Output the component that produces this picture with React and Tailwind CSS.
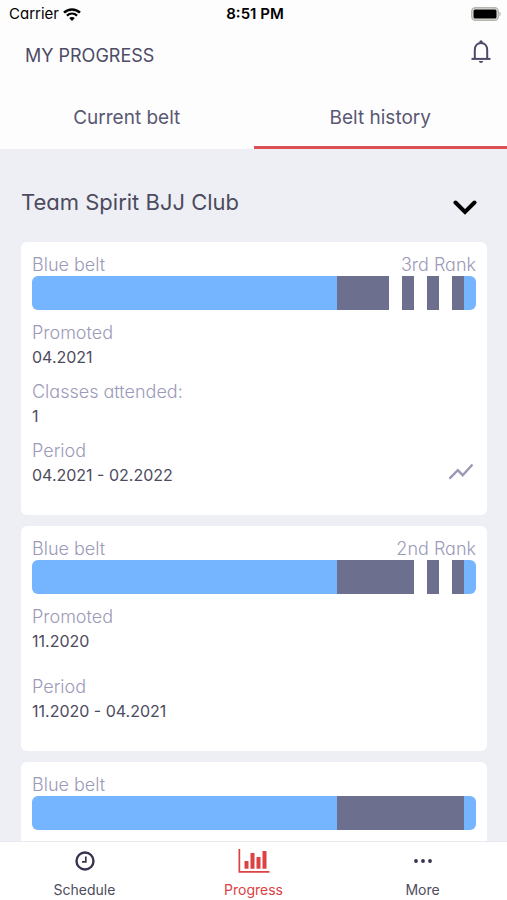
const tabs = [
  { label: "Current belt", active: false },
  { label: "Belt history", active: true },
];

const promotions = [
  {
    id: 3,
    belt: "Blue belt",
    rank: "3rd Rank",
    stripes: 3,
    promoted: "04.2021",
    classes: "1",
    period: "04.2021 - 02.2022",
    chart: true,
  },
  {
    id: 2,
    belt: "Blue belt",
    rank: "2nd Rank",
    stripes: 2,
    promoted: "11.2020",
    period: "11.2020 - 04.2021",
  },
  { id: 1, belt: "Blue belt", stripes: 0 },
];

function WifiIcon() {
  return (
    <svg width="18" height="13" viewBox="0 0 18 13" fill="none" aria-hidden="true">
      <path d="M1 4.6C5.6.3 12.4.3 17 4.6" stroke="#000" strokeWidth="2.5" />
      <path d="M3.9 7.7c3-2.8 7.200-2.800 10.200 0" stroke="#000" strokeWidth="2.3" />
      <path d="M6.200 10.100c1.600-1.500 4-1.500 5.600 0L9 13z" fill="#000" />
    </svg>
  );
}

function BatteryIcon() {
  return (
    <svg width="30" height="14" viewBox="0 0 30 14" aria-hidden="true">
      <rect x="0.700" y="0.700" width="26.600" height="12.600" rx="3.800" fill="#e4e4e0" stroke="#b5b5b0" strokeWidth="1.400" />
      <rect x="2.500" y="2.500" width="23" height="9" rx="1.500" fill="#000" />
      <path d="M28.500 4.800c1.600.6 1.600 3.800 0 4.400z" fill="#a9a9a9" />
    </svg>
  );
}

function BellIcon() {
  return (
    <svg width="20" height="24" viewBox="0 0 20 24" fill="none" stroke="#4c4a66" aria-hidden="true">
      <path d="M3.800 18.500V10c0-4 2.500-7 6.200-7s6.200 3 6.200 7v8.500" strokeWidth="2" />
      <path d="M.5 18.900h19" strokeWidth="2" />
      <circle cx="10" cy="2" r="1.700" fill="#4c4a66" stroke="none" />
      <path d="M7.800 21h4.400c-.3 1.300-1.100 2-2.200 2s-1.900-.7-2.200-2z" fill="#4c4a66" stroke="none" />
    </svg>
  );
}

function ChevronIcon() {
  return (
    <svg width="24" height="16" viewBox="0 0 24 16" fill="none" aria-hidden="true">
      <path d="M2.500 2.500 12 12l9.500-9.500" stroke="#000" strokeWidth="4" strokeLinecap="round" />
    </svg>
  );
}

function TrendIcon() {
  return (
    <svg width="26" height="18" viewBox="0 0 26 18" fill="none" aria-hidden="true">
      <path d="m1.500 15.700 8.300-8.500 4.900 5L24.500 1.500" stroke="#9b99b3" strokeWidth="2.400" strokeLinejoin="miter" />
    </svg>
  );
}

function ClockIcon() {
  return (
    <svg width="20" height="20" viewBox="0 0 20 20" fill="none" stroke="#35334f" aria-hidden="true">
      <circle cx="10" cy="10" r="8.500" strokeWidth="2.400" />
      <path d="M10.800 5.500v5.300H7" strokeWidth="1.700" />
    </svg>
  );
}

function ChartIcon() {
  return (
    <svg width="32" height="24" viewBox="0 0 32 24" fill="#dc4144" aria-hidden="true">
      <path d="M.5 0h1.700v22H31.500v1.700H.5z" />
      <rect x="6.500" y="12" width="4" height="7.700" rx=".5" />
      <rect x="12.500" y="4" width="4" height="15.700" rx=".5" />
      <rect x="18.500" y="8" width="4" height="11.700" rx=".5" />
      <rect x="24.500" y="2" width="4" height="17.700" rx=".5" />
    </svg>
  );
}

function MoreIcon() {
  return (
    <svg width="18" height="4" viewBox="0 0 18 4" fill="#35334f" aria-hidden="true">
      <circle cx="2" cy="2" r="1.900" />
      <circle cx="9" cy="2" r="1.900" />
      <circle cx="16" cy="2" r="1.900" />
    </svg>
  );
}

function BeltBar({ stripes }) {
  return (
    <div className="flex h-[34px] overflow-hidden rounded-md bg-[#75b4ff]">
      <div className="ml-auto mr-3 flex w-[127px] justify-end gap-3 bg-[#6d6f8f] pr-3">
        {Array.from({ length: stripes }, (_, i) => (
          <span key={i} className="w-[13px] bg-white" />
        ))}
      </div>
    </div>
  );
}

function Field({ label, value }) {
  return (
    <div>
      <dt className="text-lg leading-6 font-light text-[#9b9ab8]">{label}</dt>
      <dd className="text-base leading-6 text-[#4d4b5e]">{value}</dd>
    </div>
  );
}

function PromotionCard({ item }) {
  return (
    <article className="rounded-md bg-white px-[11px] pt-[11px] pb-7">
      <div className="flex h-[23px] justify-between text-lg leading-6 font-light text-[#9b9ab8]">
        <h3>{item.belt}</h3>
        {item.rank && <span>{item.rank}</span>}
      </div>
      <BeltBar stripes={item.stripes} />
      {item.period && (
        <div className="mt-[11px] flex items-end justify-between">
          <dl className={item.classes ? "flex flex-col gap-[11px]" : "flex flex-col gap-[22px]"}>
            <Field label="Promoted" value={item.promoted} />
            {item.classes && <Field label="Classes attended:" value={item.classes} />}
            <Field label="Period" value={item.period} />
          </dl>
          {item.chart && (
            <button type="button" aria-label="Show progress chart" className="pr-0.5 pb-1.5">
              <TrendIcon />
            </button>
          )}
        </div>
      )}
    </article>
  );
}

function NavItem({ label, icon, active }) {
  return (
    <a
      href="#"
      aria-current={active ? "page" : undefined}
      className={
        active
          ? "flex flex-1 flex-col items-center gap-[7px] pt-[7px] text-[#dc4144]"
          : "flex flex-1 flex-col items-center gap-[7px] pt-[7px] text-[#4d4b5e]"
      }
    >
      <span className="flex h-6 items-center">{icon}</span>
      <span className="text-sm leading-5">{label}</span>
    </a>
  );
}

export default function App() {
  return (
    <div className="flex h-screen flex-col bg-[#eeeff5] font-['Inter','Open_Sans',sans-serif] [font-feature-settings:'cv11']">
      <header className="bg-[#fdfdfe]">
        <div className="grid h-7 grid-cols-3 items-center pr-1.5 pl-[9px] text-[15px] leading-5 text-black">
          <span className="flex items-center gap-1">
            Carrier
            <WifiIcon />
          </span>
          <span className="text-center font-semibold">8:51 PM</span>
          <span className="flex justify-end">
            <BatteryIcon />
          </span>
        </div>
        <div className="flex h-[55px] items-center justify-between pr-4 pl-[25px]">
          <h1 className="text-lg text-[#4d4b66]">MY PROGRESS</h1>
          <button type="button" aria-label="Notifications" className="pb-2">
            <BellIcon />
          </button>
        </div>
        <div role="tablist" className="flex h-[66px]">
          {tabs.map((tab) => (
            <button
              key={tab.label}
              type="button"
              role="tab"
              aria-selected={tab.active}
              className={
                tab.active
                  ? "flex-1 border-b-3 border-[#dc4f52] pt-2 text-[19px] text-[#5a5872]"
                  : "flex-1 border-b-3 border-transparent pt-2 text-[19px] text-[#5a5872]"
              }
            >
              {tab.label}
            </button>
          ))}
        </div>
      </header>

      <main className="min-h-0 flex-1 overflow-y-auto pr-5 pl-[21px] [scrollbar-width:none]">
        <button
          type="button"
          className="flex h-[93px] w-full items-center justify-between pt-3.5 pr-2.5"
        >
          <h2 className="text-[22px] text-[#4d4b5e]">Team Spirit BJJ Club</h2>
          <span className="pt-2.5">
            <ChevronIcon />
          </span>
        </button>
        <div className="flex flex-col gap-[11px]">
          {promotions.map((item) => (
            <PromotionCard key={item.id} item={item} />
          ))}
        </div>
      </main>

      <nav className="flex h-[59px] border-t border-[#e9e9f0] bg-white">
        <NavItem label="Schedule" icon={<ClockIcon />} />
        <NavItem label="Progress" icon={<ChartIcon />} active />
        <NavItem label="More" icon={<MoreIcon />} />
      </nav>
    </div>
  );
}
